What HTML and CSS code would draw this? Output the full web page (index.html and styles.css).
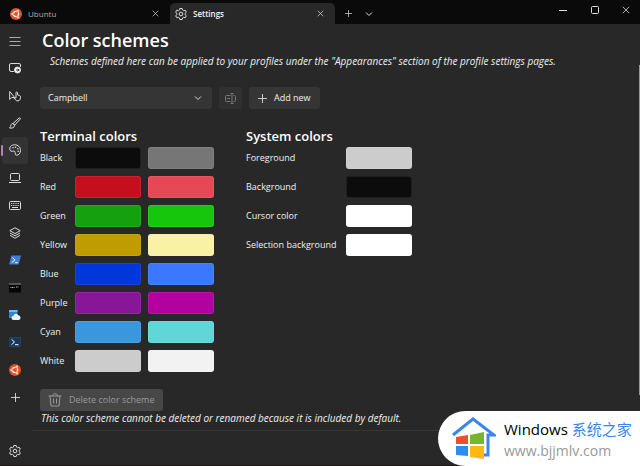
FILE: index.html
```html
<!DOCTYPE html>
<html lang="en">
<head>
<meta charset="utf-8">
<title>Settings</title>
<link rel="stylesheet" href="styles.css">
</head>
<body>
<svg class="defs" aria-hidden="true">
  <symbol id="gear" viewBox="0 0 24 24"><path d="M9.600 1h4.800l.7 3.200 2 1.200 3.200-1 2.400 4.100-2.500 2.200v2.600l2.500 2.200-2.400 4.100-3.200-1-2 1.200-.7 3.200H9.600l-.7-3.200-2-1.200-3.200 1-2.400-4.100 2.500-2.200v-2.600L1.300 8.500l2.400-4.100 3.200 1 2-1.200z" stroke-linejoin="round"/><circle cx="12" cy="12" r="3.600"/></symbol>
  <symbol id="x" viewBox="0 0 10 10"><path d="M1 1l8 8M9 1L1 9"/></symbol>
  <symbol id="plus" viewBox="0 0 10 10"><path d="M5 0v10M0 5h10"/></symbol>
  <symbol id="chevron" viewBox="0 0 8 8"><path d="M1 2.500l3 3 3-3"/></symbol>
  <symbol id="ubuntu" viewBox="0 0 24 24"><circle cx="12" cy="12" r="12" fill="#dd5228" stroke="none"/><circle cx="12" cy="12" r="5.200" fill="none" stroke="#fff" stroke-width="2.600" stroke-dasharray="9.100 1.800" stroke-dashoffset="-6.300"/><g fill="#fff" stroke="#dd5228" stroke-width="1"><circle cx="4.700" cy="12" r="2.500"/><circle cx="15.700" cy="5.700" r="2.500"/><circle cx="15.700" cy="18.300" r="2.500"/></g></symbol>
</svg>
<div class="window">
  <header class="titlebar">
    <div class="tab">
      <svg class="i12"><use href="#ubuntu"/></svg><span>Ubuntu</span>
      <button class="plain" aria-label="Close tab"><svg class="i7"><use href="#x"/></svg></button>
    </div>
    <div class="tab active">
      <svg class="i12"><use href="#gear"/></svg><span>Settings</span>
      <button class="plain" aria-label="Close tab"><svg class="i7"><use href="#x"/></svg></button>
    </div>
    <button class="plain newtab" aria-label="New tab"><svg class="i7"><use href="#plus"/></svg></button>
    <button class="plain more" aria-label="More"><svg class="i8"><use href="#chevron"/></svg></button>
    <div class="controls">
      <button class="plain" aria-label="Minimize"><svg class="i8" viewBox="0 0 8 8"><path d="M0 4.500h8"/></svg></button>
      <button class="plain" aria-label="Maximize"><svg class="i8" viewBox="0 0 8 8"><rect x=".5" y=".5" width="7" height="7" rx="1"/></svg></button>
      <button class="plain" aria-label="Close"><svg class="i8"><use href="#x"/></svg></button>
    </div>
  </header>
  <div class="body">
    <nav class="rail">
      <div class="rail-list">
        <button class="plain menu" aria-label="Menu"><svg viewBox="0 0 12 12"><path d="M.5 2.500h11M.5 6.500h11M.5 10.500h11"/></svg></button>
        <button class="plain" aria-label="Startup"><svg viewBox="0 0 12 12"><path d="M5 9.500H2a1.500 1.500 0 0 1-1.500-1.500V3A1.500 1.500 0 0 1 2 1.500h8A1.500 1.500 0 0 1 11.500 3v2"/><circle cx="8.500" cy="8" r="3" fill="#fff"/><path d="M7 8h3M8.800 6.600L10.200 8 8.800 9.400" stroke="#282828"/></svg></button>
        <button class="plain" aria-label="Interaction"><svg viewBox="0 0 12 12"><path d="M.7 1.500v8l2-2h3zM7 7V2.800a.8.8 0 0 1 1.600 0V5l2 .5a1.500 1.500 0 0 1 .9 1.800L11 9.500a2 2 0 0 1-2 1.300H7.500L5 8.200 7 8z"/></svg></button>
        <button class="plain" aria-label="Appearance"><svg viewBox="0 0 12 12"><path d="M4 6.500l6-5.400c.8-.7 1.800.2 1.100 1.100L5.600 8.200zM4 6.500c-2 0-2 1.500-2.300 3L.6 11c2.500.5 4.800-.2 5-2.800z"/></svg></button>
        <button class="plain selected" aria-label="Color schemes"><svg viewBox="0 0 12 12"><path d="M1 6.300C-.2 3 2.400.8 5.600.8c3.500 0 6 2.500 5.900 5.700-.1 3-2 4.700-3.700 4.700-2.400 0-1-2.600-2-3.700C4.800 6.300 2 8.500 1 6.300z"/><g fill="#ddd" stroke="none"><circle cx="4" cy="3.700" r=".8"/><circle cx="6.500" cy="3.200" r=".8"/><circle cx="8.800" cy="4.700" r=".8"/><circle cx="9.200" cy="7.300" r=".8"/></g></svg></button>
        <button class="plain" aria-label="Rendering"><svg viewBox="0 0 12 12"><rect x="1.500" y="1.500" width="9" height="7" rx="1"/><path d="M0 10.500h12"/></svg></button>
        <button class="plain" aria-label="Actions"><svg viewBox="0 0 12 12"><rect x=".5" y="2.500" width="11" height="8" rx="1"/><path d="M2 4.500h8M2 6.500h8" stroke-dasharray="1 .8"/><path d="M3 8.500h6"/></svg></button>
        <button class="plain" aria-label="Defaults"><svg viewBox="0 0 12 12"><path d="M6 .8l5.200 2.900L6 6.600.8 3.700z"/><path d="M1 6l5 2.800L11 6M1 8.300l5 2.900 5-2.900"/></svg></button>
        <button class="plain" aria-label="Windows PowerShell"><svg viewBox="0 0 12 12"><path d="M2.400 1.500H12L9.700 10.500H0z" fill="#3f7ed0" stroke="none"/><path d="M3.500 3.500L6 6 2.800 8.500M6.200 8.700h2.500" stroke="#fff"/></svg></button>
        <button class="plain" aria-label="Command Prompt"><svg viewBox="0 0 12 12"><path d="M0 1.500h12v9H0z" fill="#050505" stroke="none"/><path d="M0 2h12" stroke="#999"/><path d="M1.500 5.500h4M7 5h3" stroke="#bbb" stroke-dasharray="1 .5"/></svg></button>
        <button class="plain" aria-label="Azure Cloud Shell"><svg viewBox="0 0 12 12"><path d="M0 1h8.500v8H0z" fill="#3183d5" stroke="none"/><path d="M0 1h8.500v2H0z" fill="#75b9ef" stroke="none"/><path d="M4.500 11a2 2 0 0 1-.2-4 2.600 2.600 0 0 1 4.900-.8A2.500 2.500 0 0 1 10 11z" fill="#e8f1fa" stroke="none"/></svg></button>
        <button class="plain" aria-label="PowerShell"><svg viewBox="0 0 12 12"><path d="M.5 1.500H12L11 10.500H0z" fill="#17365c" stroke="#35577d" stroke-width=".5"/><path d="M2.500 3.300L5.500 6 2.500 8.700M6 8.700h3.500" stroke="#fff"/></svg></button>
        <button class="plain" aria-label="Ubuntu"><svg><use href="#ubuntu"/></svg></button>
        <button class="plain" aria-label="Add a new profile"><svg class="i9"><use href="#plus"/></svg></button>
      </div>
      <button class="plain rail-settings" aria-label="Settings"><svg><use href="#gear"/></svg></button>
    </nav>
    <main class="content">
      <h1>Color schemes</h1>
      <p class="intro">Schemes defined here can be applied to your profiles under the "Appearances" section of the profile settings pages.</p>
      <div class="toolbar">
        <div class="select">
          <select aria-label="Color scheme"><option>Campbell</option></select>
          <svg class="i8"><use href="#chevron"/></svg>
        </div>
        <button class="btn rename" aria-label="Rename" disabled><svg class="i11" viewBox="0 0 11 11"><path d="M5.500 2.500h-4a1 1 0 0 0-1 1v4a1 1 0 0 0 1 1h4M8.500 2.500h1a1 1 0 0 1 1 1v4a1 1 0 0 1-1 1h-1M7 .5v10M5.500.5h3M5.500 10.500h3M2 5.500h3"/></svg></button>
        <button class="btn add"><svg class="i9"><use href="#plus"/></svg>Add new</button>
      </div>
      <div class="groups">
        <section>
          <h2>Terminal colors</h2>
          <div class="grid terminal">
            <span>Black</span><button class="swatch black" aria-label="Black"></button><button class="swatch bright-black" aria-label="Bright black"></button>
            <span>Red</span><button class="swatch red" aria-label="Red"></button><button class="swatch bright-red" aria-label="Bright red"></button>
            <span>Green</span><button class="swatch green" aria-label="Green"></button><button class="swatch bright-green" aria-label="Bright green"></button>
            <span>Yellow</span><button class="swatch yellow" aria-label="Yellow"></button><button class="swatch bright-yellow" aria-label="Bright yellow"></button>
            <span>Blue</span><button class="swatch blue" aria-label="Blue"></button><button class="swatch bright-blue" aria-label="Bright blue"></button>
            <span>Purple</span><button class="swatch purple" aria-label="Purple"></button><button class="swatch bright-purple" aria-label="Bright purple"></button>
            <span>Cyan</span><button class="swatch cyan" aria-label="Cyan"></button><button class="swatch bright-cyan" aria-label="Bright cyan"></button>
            <span>White</span><button class="swatch white" aria-label="White"></button><button class="swatch bright-white" aria-label="Bright white"></button>
          </div>
        </section>
        <section>
          <h2>System colors</h2>
          <div class="grid system">
            <span>Foreground</span><button class="swatch white" aria-label="Foreground"></button>
            <span>Background</span><button class="swatch black" aria-label="Background"></button>
            <span>Cursor color</span><button class="swatch pure" aria-label="Cursor color"></button>
            <span>Selection background</span><button class="swatch pure" aria-label="Selection background"></button>
          </div>
        </section>
      </div>
      <button class="btn delete" disabled><svg class="i14" viewBox="0 0 14 14"><path d="M.5 3h13M4.500 3c0-3 5-3 5 0M2 3l1 10h8l1-10M5.500 5.500v5M8.500 5.500v5"/></svg>Delete color scheme</button>
      <p class="note">This color scheme cannot be deleted or renamed because it is included by default.</p>
      <hr>
    </main>
    <div class="scrollbar"></div>
  </div>
</div>
<div class="watermark">
  <svg viewBox="0 0 44 44"><path d="M1 18L21 2l21 16h-6v20h-5" fill="none" stroke="#3b86ea" stroke-width="3"/><path d="M4 20l12-2v9H4z" fill="#ee4f27"/><path d="M18 18l14-3v12H18z" fill="#76b729"/><path d="M4 29h12v10L4 38z" fill="#2d8cf0"/><path d="M18 29h14v13l-14-2z" fill="#fdb813"/></svg>
  <div>
    <div class="brand">Windows <span>系统之家</span></div>
    <div class="site">www.bjjmlv.com</div>
  </div>
</div>
</body>
</html>
```
FILE: styles.css
```css
* { box-sizing: border-box; }
body {
  margin: 0;
  background: #282828;
  color: #f0f0f0;
  font: 9px/14px "Open Sans", "Noto Sans", sans-serif;
}
h1, h2, p { margin: 0; }
button, select { font: inherit; color: inherit; }
svg { display: block; flex: none; fill: none; stroke: #ddd; stroke-width: 1; }
#gear { stroke-width: 2; }
.defs { position: absolute; width: 0; height: 0; }
.i7 { width: 7px; height: 7px; }
.i8 { width: 8px; height: 8px; }
.i9 { width: 9px; height: 9px; }
.i11 { width: 11px; height: 11px; }
.i12 { width: 12px; height: 12px; }
.i14 { width: 14px; height: 14px; }

.window { min-height: 100vh; display: flex; flex-direction: column; border-bottom: 1px solid #201618; }
.plain {
  display: flex; align-items: center; justify-content: center;
  padding: 0; border: 0; background: none;
}

.titlebar { display: flex; height: 24px; padding-top: 3px; background: #0a0a0a; }
.tab {
  display: flex; align-items: center; gap: 6px;
  width: 165px; padding: 0 11px 0 5px;
  border-radius: 5px 5px 0 0; color: #aaa; font-size: 8px;
}
.tab:first-child { width: 170px; padding-left: 10px; }
.tab .plain { margin-left: auto; }
.tab.active { background: #282828; color: #f4f4f4; font-weight: 600; }
.newtab { width: 27px; }
.more { width: 14px; }
.controls { display: flex; margin-left: auto; height: 14px; }
.controls .plain { width: 32px; }
.controls .plain:last-child { width: 29px; }

.body { flex: 1; display: flex; }
.rail { width: 32px; display: flex; flex-direction: column; padding: 3px 4px 0 2px; }
.rail-list { flex: 1; display: flex; flex-direction: column; }
.rail-list .plain { flex: 1; }
.rail svg { width: 12px; height: 12px; }
.rail svg.i9 { width: 9px; height: 9px; }
.menu svg { stroke: #aaa; }
.rail .selected { position: relative; background: #333; border-radius: 3px; }
.selected::before {
  content: ""; position: absolute; left: -1px; top: 8px; bottom: 8px;
  width: 2px; border-radius: 1px; background: #b77fc6;
}
.rail-settings { height: 28px; margin-top: 26px; }

.content { flex: 1; min-width: 0; padding-left: 8px; }
h1 { margin: 3px 0 0 2px; font-size: 18px; line-height: 26px; font-weight: 600; color: #fff; }
.intro { margin: 1px 0 0 10px; font-size: 10px; font-style: italic; white-space: nowrap; }
.toolbar { display: flex; gap: 7px; margin-top: 19px; }
.select { position: relative; width: 172px; }
.select select {
  width: 100%; height: 22px; padding: 0 8px;
  appearance: none; border: 0; border-radius: 3px; background: #353535;
}
.select svg { position: absolute; right: 10px; top: 7px; }
.btn {
  display: flex; align-items: center; gap: 7px;
  height: 22px; padding: 0 9px;
  border: 0; border-radius: 3px; background: #353535;
}
.rename { padding: 0 6px; background: #303030; }
.rename svg { stroke: #777; }

.groups { display: flex; gap: 32px; margin-top: 18px; }
h2 { font-size: 13px; line-height: 18px; font-weight: 600; color: #fff; margin-bottom: 2px; }
.grid { display: grid; gap: 7px; grid-auto-rows: 22px; align-items: center; }
.terminal { grid-template-columns: 28px 66px 66px; }
.system { grid-template-columns: 93px 66px; }
.grid span { white-space: nowrap; }
.swatch { height: 22px; padding: 0; border: 1px solid #ffffff14; border-radius: 3px; }
.black { background: #0c0c0c; }
.bright-black { background: #767676; }
.red { background: #c50f1f; }
.bright-red { background: #e74856; }
.green { background: #13a10e; }
.bright-green { background: #16c60c; }
.yellow { background: #c19c00; }
.bright-yellow { background: #f9f1a5; }
.blue { background: #0037da; }
.bright-blue { background: #3b78ff; }
.purple { background: #881798; }
.bright-purple { background: #b4009e; }
.cyan { background: #3a96dd; }
.bright-cyan { background: #61d6d6; }
.white { background: #ccc; }
.bright-white { background: #f2f2f2; }
.pure { background: #fff; }

.delete { margin-top: 17px; padding: 0 8px; background: #474747; color: #999; }
.delete svg { stroke: #999; }
.note { margin-left: 1px; font-size: 10px; font-style: italic; }
hr { margin: 5px 0 0 -8px; border: 0; border-top: 1px solid #363636; }
.scrollbar { width: 1px; margin: 41px 0 70px; background: #999; }

.watermark {
  position: absolute; right: 0; bottom: 0;
  display: flex; align-items: center; gap: 8px;
  width: 202px; height: 55px; padding-left: 14px;
  border-radius: 28px 0 0 28px; background: #fff;
  white-space: nowrap;
}
.watermark svg { width: 44px; height: 44px; stroke: none; }
.brand { font-size: 15px; line-height: 24px; color: #000; }
.brand span { color: #3b86ea; font-family: "Noto Sans CJK SC", sans-serif; }
.site { font-size: 14px; line-height: 20px; color: #999; }
```
